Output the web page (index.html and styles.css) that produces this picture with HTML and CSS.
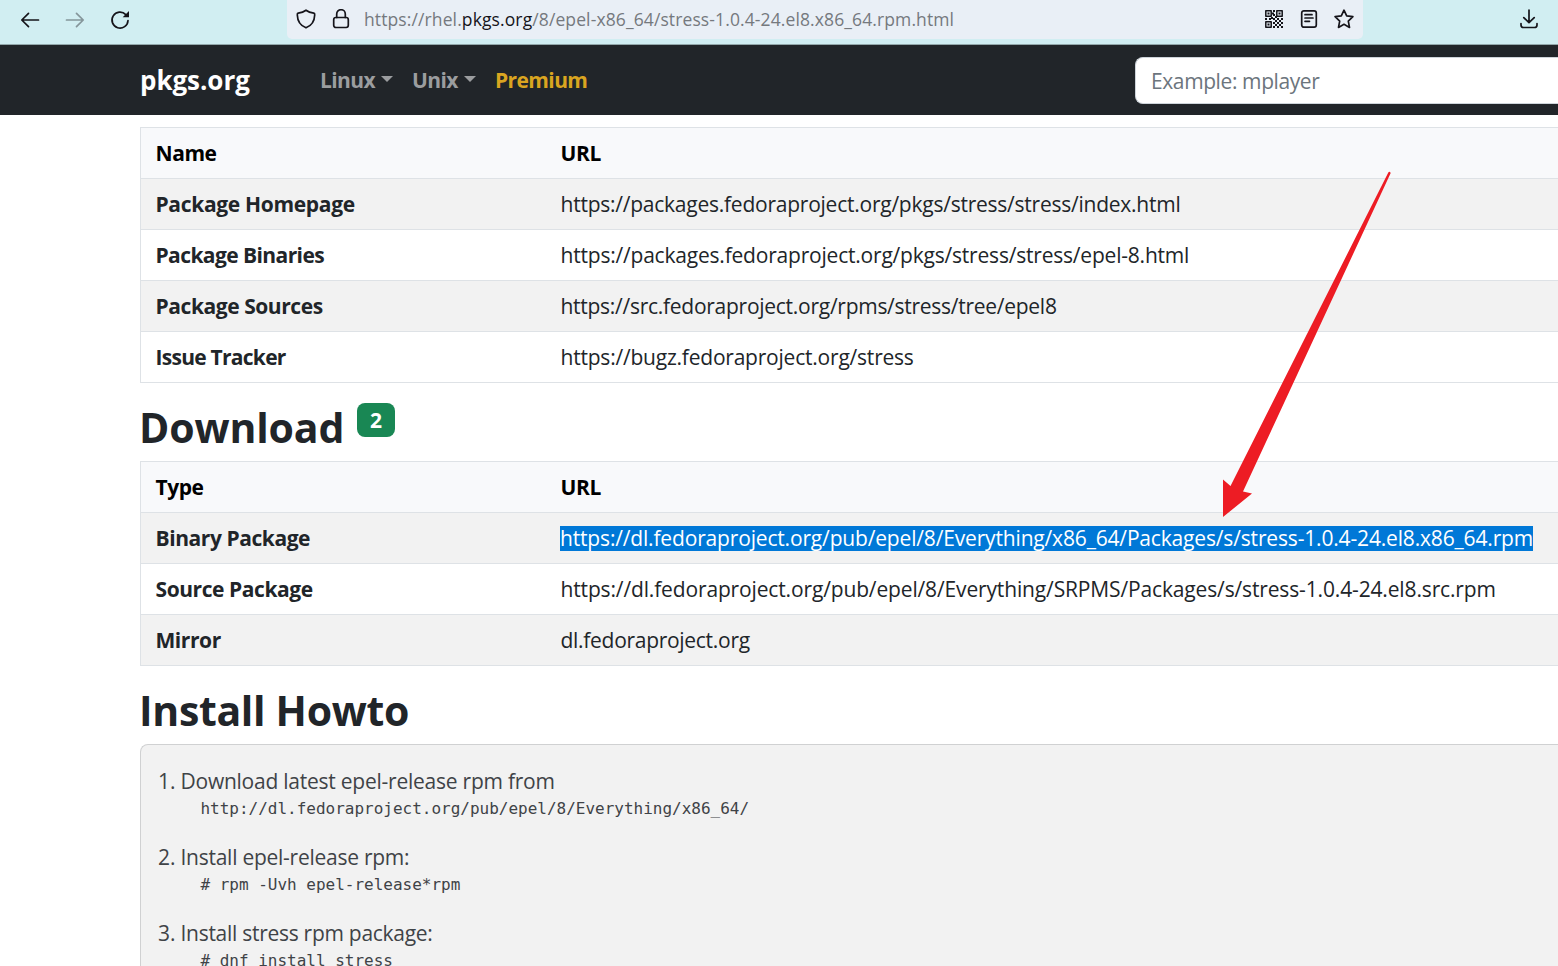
FILE: index.html
```html
<!DOCTYPE html>
<html lang="en">
<head>
<meta charset="utf-8">
<title>stress-1.0.4-24.el8.x86_64.rpm</title>
<link rel="stylesheet" href="styles.css">
</head>
<body>
<header class="browser">
  <div class="nav-icons">
    <svg width="20" height="20" viewBox="0 0 20 20"><path d="M18.500 10H2M8.500 3.300L1.800 10l6.700 6.700"/></svg>
    <svg class="dim" width="20" height="20" viewBox="0 0 20 20"><path d="M1.500 10H18M11.500 3.300L18.200 10l-6.700 6.700"/></svg>
    <svg width="20" height="20" viewBox="0 0 20 20"><path d="M18 10.500A8 8 0 1 1 15.800 4.600"/><path class="solid" d="M19 1v6.300h-6.300z"/></svg>
  </div>
  <div class="address">
    <svg width="20" height="20" viewBox="0 0 20 20"><path d="M10 1.200C7.500 3 5 3.700 2.200 4.200C1.300 4.400 1.200 4.800 1.300 6C1.500 11.500 4 16.500 10 18.800C16 16.500 18.500 11.500 18.700 6C18.800 4.800 18.700 4.400 17.800 4.200C15 3.700 12.500 3 10 1.200z"/></svg>
    <svg width="20" height="20" viewBox="0 0 20 20"><rect x="2.700" y="8.500" width="14.600" height="10" rx="2.200"/><path d="M5.700 8.500V5a4.300 4.300 0 0 1 8.600 0v3.500"/></svg>
    <div class="url"><span>https://rhel.</span><b>pkgs.org</b><span>/8/epel-x86_64/stress-1.0.4-24.el8.x86_64.rpm.html</span></div>
    <div class="actions">
      <svg class="qr" width="20" height="20" viewBox="0 0 20 20"><path d="M1.800 1.800h5.400v5.400H1.800zM12.800 1.800h5.400v5.400h-5.400zM1.800 12.800h5.400v5.400H1.800z"/><path class="solid" d="M3.500 3.500h2v2h-2zM14.500 3.500h2v2h-2zM3.500 14.500h2v2h-2zM9 1h2v2H9zM9 5h2v2H9zM8 3.500h2v2H8zM1 9h2v2H1zM5 9h2v2H5zM7 8h2v2H7zM9 9h2v2H9zM11 7h2v2h-2zM13 9h2v2h-2zM17 9h2v2h-2zM15 11h2v2h-2zM11 11h2v2h-2zM9 13h2v2H9zM13 13h2v2h-2zM17 13h2v2h-2zM11 15h2v2h-2zM15 15h2v2h-2zM9 17h2v2H9zM13 17h2v2h-2zM17 17h2v2h-2z"/></svg>
      <svg width="20" height="20" viewBox="0 0 20 20"><rect x="2.700" y="1.800" width="14.600" height="16.400" rx="2.200"/><path d="M6 5.700h7M6 9h8M6 12.300h4.500"/></svg>
      <svg width="20" height="20" viewBox="0 0 20 20"><path d="M10 1.200l2.700 5.700 6.200.8-4.600 4.400 1.200 6.300L10 15.300l-5.500 3.100 1.200-6.300L1.100 7.700l6.200-.8z"/></svg>
    </div>
  </div>
  <svg class="download" width="20" height="20" viewBox="0 0 20 20"><path d="M10 1v12.500M4.800 8.700L10 13.700l5.200-5M2 14.500v1.500q0 2.500 2.500 2.500h11q2.500 0 2.500-2.500v-1.500"/></svg>
</header>
<nav class="navbar">
  <a class="brand">pkgs.org</a>
  <div class="links"><a class="linux">Linux<i class="caret"></i></a><a class="unix">Unix<i class="caret"></i></a><a class="premium">Premium</a></div>
  <div class="search">Example: mplayer</div>
</nav>
<main>
  <div class="table">
    <div class="row head"><b>Name</b><b>URL</b></div>
    <div class="row odd"><b class="home">Package Homepage</b><span class="u1">https://packages.fedoraproject.org/pkgs/stress/stress/index.html</span></div>
    <div class="row"><b class="bins">Package Binaries</b><span class="u2">https://packages.fedoraproject.org/pkgs/stress/stress/epel-8.html</span></div>
    <div class="row odd"><b>Package Sources</b><span class="u3">https://src.fedoraproject.org/rpms/stress/tree/epel8</span></div>
    <div class="row"><b class="issue">Issue Tracker</b><span class="u4">https://bugz.fedoraproject.org/stress</span></div>
  </div>
  <h2 class="dl"><span>Download</span><em>2</em></h2>
  <div class="table">
    <div class="row head"><b>Type</b><b>URL</b></div>
    <div class="row odd"><b>Binary Package</b><span class="u5 selected">https://dl.fedoraproject.org/pub/epel/8/Everything/x86_64/Packages/s/stress-1.0.4-24.el8.x86_64.rpm</span></div>
    <div class="row"><b>Source Package</b><span class="u6">https://dl.fedoraproject.org/pub/epel/8/Everything/SRPMS/Packages/s/stress-1.0.4-24.el8.src.rpm</span></div>
    <div class="row odd"><b>Mirror</b><span class="u7">dl.fedoraproject.org</span></div>
  </div>
  <h2 class="howto">Install Howto</h2>
  <div class="card">
    <div class="step"><p><span class="num">1.</span><span class="s1">Download latest epel-release rpm from</span></p><code>http://dl.fedoraproject.org/pub/epel/8/Everything/x86_64/</code></div>
    <div class="step"><p><span class="num">2.</span><span class="s2">Install epel-release rpm:</span></p><code>&#35; rpm -Uvh epel-release*rpm</code></div>
    <div class="step"><p><span class="num">3.</span><span class="s3">Install stress rpm package:</span></p><code>&#35; dnf install stress</code></div>
  </div>
</main>
<svg class="arrow" width="170" height="350" viewBox="1221 170 170 350"><path d="M1388.300 172.500Q1389.500 171 1390.700 173L1243 491.500 1252 493.500 1223 517V479.500L1230.500 486z"/></svg>
</body>
</html>
```
FILE: styles.css
```css
* { box-sizing: border-box; }
body { margin: 0; height: 966px; overflow: hidden; background: #fff; color: #212529; font: 21px/50px "Open Sans", "Noto Sans", sans-serif; white-space: nowrap; }
svg { display: block; flex: none; fill: none; stroke: #15141a; stroke-width: 1.7; stroke-linecap: round; stroke-linejoin: round; }
.solid { fill: #15141a; stroke: none; }
.browser { display: flex; height: 45px; background: #d1eef2; border-bottom: 1px solid #93a8ab; }
.nav-icons { display: flex; gap: 25px; padding: 10px 0 0 20px; width: 287px; }
.dim { opacity: .4; }
.address { display: flex; width: 1076px; height: 39px; padding: 9px 9px 0; gap: 15px; background: #e9eff6; border-radius: 0 0 5px 5px; }
.url { display: flex; margin-left: -2px; font-size: 17.500px; letter-spacing: .11px; line-height: 21px; color: #75797e; }
.url b { font-weight: 400; color: #15141a; }
.actions { display: flex; gap: 15px; margin-left: auto; }
.qr { stroke-width: 1.500; }
.download { margin: 9px 0 0 156px; }
.navbar { display: flex; height: 70px; padding-left: 140px; background: #212529; color: #9b9d9f; font-weight: 700; line-height: 71px; }
.brand { flex: none; width: 180px; color: #fff; font-size: 26px; letter-spacing: -.05px; line-height: 71px; }
.links { display: flex; flex: none; width: 815px; letter-spacing: -.6px; }
.linux { width: 92px; }
.unix { width: 83px; }
.caret { display: inline-block; margin-left: 6px; vertical-align: 6px; border: 6px solid transparent; border-top-color: currentColor; border-bottom: 0; }
.premium { color: #daa520; }
.search { flex: 1; height: 47px; margin-top: 12px; padding-left: 15px; border: 1px solid #ced4da; border-right: 0; border-radius: 8px 0 0 8px; background: #fff; color: #6c757d; font-weight: 400; letter-spacing: -.4px; line-height: 46px; }
main { padding: 12px 0 0 140px; }
.table { border: 1px solid #dee2e6; border-width: 1px 0 0 1px; }
.row { display: grid; grid-template-columns: 405px 1fr; height: 51px; padding: 0 0 0 14.500px; border-bottom: 1px solid #dee2e6; align-items: center; }
.row b { font-weight: 700; letter-spacing: -.43px; }
.row .home { letter-spacing: -.32px; }
.row .bins { letter-spacing: -.58px; }
.row .issue { letter-spacing: -.73px; }
.row span { justify-self: start; }
.row.head { background: #f8f9fb; color: #000; }
.odd { background: #f2f2f2; }
.u1 { letter-spacing: -.24px; }
.u2 { letter-spacing: -.205px; }
.u3 { letter-spacing: -.27px; }
.u4 { letter-spacing: -.215px; }
.u5 { letter-spacing: -.165px; }
.u6 { letter-spacing: -.145px; }
.u7 { letter-spacing: -.29px; }
.selected { height: 25px; line-height: 25px; margin-left: -.5px; background: #0078d7; color: #fff; }
h2 { margin: 0; font-size: 41px; font-weight: 700; letter-spacing: -.32px; }
.dl { display: flex; height: 78px; line-height: 88px; letter-spacing: -.15px; }
.dl span { width: 218px; margin-left: -1px; }
.dl em { width: 38px; height: 34px; margin-top: 20px; border-radius: 8px; background: #198754; color: #fff; font: 700 21px/34px "Open Sans", sans-serif; text-align: center; }
.howto { height: 78px; margin-left: -1px; line-height: 88px; }
.card { height: 222px; padding: 20px 17px 0; border: 1px solid #d0d1d2; border-width: 1px 0 0 1px; border-radius: 8px 0 0 0; background: #f2f2f2; color: #3f4347; }
.step { height: 76px; }
.step p { display: flex; margin: 0; height: 32px; line-height: 32px; }
.num { width: 22.500px; }
.s1 { letter-spacing: -.24px; }
.s2 { letter-spacing: -.26px; }
.s3 { letter-spacing: -.28px; }
.step code { display: block; padding-left: 42.500px; font: 16px/23px "DejaVu Sans Mono", monospace; letter-spacing: -.01px; }
.arrow { position: absolute; left: 1221px; top: 170px; stroke: none; fill: #ed1c24; }
```
